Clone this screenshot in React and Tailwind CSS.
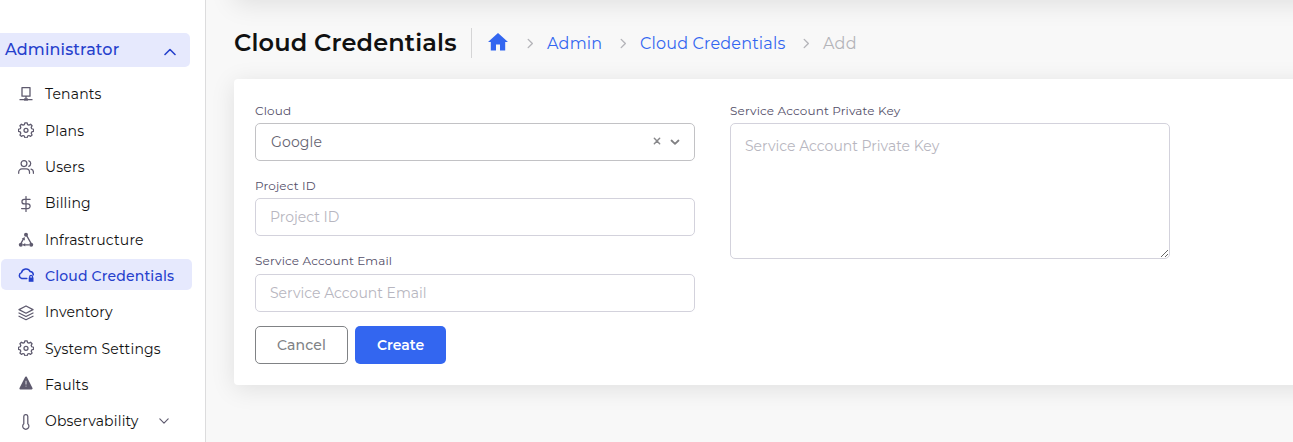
import React from 'react';

const Svg = ({ children, className = 'h-4 w-4' }) => (
  <svg viewBox="0 0 16 16" fill="none" stroke="currentColor" strokeWidth="1.25" strokeLinecap="round" strokeLinejoin="round" className={'shrink-0 ' + className}>
    {children}
  </svg>
);

const Tenants = () => (
  <Svg className="-mt-0.5 h-4 w-4">
    <path d="M4 1.6h8v8.6H4zM8 10.2v3M1.5 13.7h13" strokeWidth="1.3" strokeLinecap="butt" />
    <path d="M6 12.4h4v2.2H6z" fill="currentColor" stroke="none" />
  </Svg>
);

const Gear = () => (
  <svg viewBox="0 0 24 24" fill="none" stroke="currentColor" strokeWidth="1.9" strokeLinejoin="round" className="-mt-0.5 h-4 w-4 shrink-0">
    <path d="M10.4 1.2h3.2l.8 2.7 2 .8 2.5-1.300 2.200 2.200-1.300 2.500.8 2 2.700.8v3.200l-2.700.8-.8 2 1.300 2.500-2.200 2.200-2.500-1.300-2 .8-.8 2.700h-3.200l-.8-2.700-2-.8-2.500 1.300-2.200-2.200 1.300-2.500-.8-2-2.700-.8v-3.200l2.700-.8.8-2-1.300-2.500 2.200-2.200 2.500 1.300 2-.8z" />
    <circle cx="12" cy="12.5" r="3" />
  </svg>
);

const Users = () => (
  <Svg>
    <circle cx="6" cy="4.6" r="2.9" />
    <path d="M.7 14.3v-1.2a3.2 3.2 0 0 1 3.2-3.2h4.4a3.2 3.2 0 0 1 3.2 3.2v1.2M10.8 1.8a3 3 0 0 1 0 5.6M13 10.1a3.1 3.1 0 0 1 2.4 3v1.2" />
  </Svg>
);

const Dollar = () => (
  <Svg>
    <path d="M8 .6v14.8M12 3.4H6.2a2.2 2.2 0 0 0 0 4.5h3.6a2.3 2.3 0 0 1 0 4.6H3.6" />
  </Svg>
);

const Nodes = () => (
  <Svg className="-mt-px h-4 w-4">
    <path d="M9.1 4.4l3.7 6.4M5.3 12.8h5.4M3.4 10.6l1.8-3.2" strokeWidth="1.3" />
    <g fill="currentColor" stroke="none">
      <circle cx="8" cy="2.8" r="2" />
      <circle cx="2.8" cy="12.8" r="2" />
      <circle cx="13.2" cy="12.8" r="2" />
      <path d="M5 12.8 7.2 11v3.6zM3.7 6.8l3-1.7.2 3.5z" />
    </g>
  </Svg>
);

const CloudLock = () => (
  <Svg className="-mt-0.5 h-4 w-4">
    <path d="M8.8 11.4H3.7A3 3 0 0 1 3.5 5.6 4.6 4.6 0 0 1 12.2 4.6a3.3 3.3 0 0 1 3.1 3.2" strokeWidth="1.5" />
    <path d="M11.7 11V9.8a1.4 1.4 0 0 1 2.8 0V11" />
    <path d="M10.7 10.6h4.8v4.2h-4.8z" fill="currentColor" stroke="none" />
  </Svg>
);

const Layers = () => (
  <Svg>
    <path d="M8 1 15 4.6 8 8.2 1 4.6zM1 8l7 3.5L15 8M1 11.2l7 3.5 7-3.5" />
  </Svg>
);

const Warning = () => (
  <Svg className="-mt-1 h-4 w-4">
    <path d="M8 2.5 13.6 13.4H2.4z" fill="currentColor" strokeWidth="2" />
    <path d="M8 5.8v3.6M8 10.8v.8" stroke="#c9c8cf" strokeLinecap="butt" />
  </Svg>
);

const Thermo = () => (
  <Svg>
    <path d="M5.8 9.8V2.6a2 2 0 0 1 4 0v7.2a3.1 3.1 0 1 1-4 0z" />
  </Svg>
);

const Chevron = ({ d, className, w = 1.4 }) => (
  <svg viewBox="0 0 12 12" fill="none" stroke="currentColor" strokeWidth={w} strokeLinecap="round" strokeLinejoin="round" className={className}>
    <path d={d} />
  </svg>
);

const items = [
  { label: 'Tenants', Icon: Tenants },
  { label: 'Plans', Icon: Gear },
  { label: 'Users', Icon: Users },
  { label: 'Billing', Icon: Dollar },
  { label: 'Infrastructure', Icon: Nodes },
  { label: 'Cloud Credentials', Icon: CloudLock, active: true },
  { label: 'Inventory', Icon: Layers },
  { label: 'System Settings', Icon: Gear },
  { label: 'Faults', Icon: Warning },
  { label: 'Observability', Icon: Thermo, more: true },
];

function Sidebar() {
  return (
    <aside className="flex w-[206px] shrink-0 flex-col border-r border-[#dcdcdd] bg-white pt-[33px]">
      <div className="flex h-[34px] w-[190px] shrink-0 items-center justify-between rounded-r-[5px] bg-[#e6e9fd] pl-[5px] pr-3.5 text-[#2540cc]">
        <span className="text-[16px] font-medium tracking-[0.15px]">Administrator</span>
        <Chevron d="M1 8.5 6 3.5l5 5" className="mt-1 h-3 w-3" w={1.6} />
      </div>
      <nav className="mt-[9.6px] flex flex-col">
        {items.map(({ label, Icon, active, more }) => (
          <div key={label} className="flex h-[36.33px] shrink-0 items-center pb-[3px] pl-px">
            <a className={'flex h-[31px] w-[191px] items-center rounded-[5px] pl-[17px] pt-[3px] ' + (active ? 'bg-[#e6e9fd] font-medium text-[#2540cc]' : 'text-[#5e5a6e]')}>
              <Icon />
              <span className={'ml-[11px] text-[14px] tracking-[0.17px]' + (active ? '' : ' text-[#111]')}>{label}</span>
              {more && <Chevron d="M1 3.5 6 8.5l5-5" className="-mt-0.5 ml-auto mr-[23px] h-2.5 w-2.5" />}
            </a>
          </div>
        ))}
      </nav>
    </aside>
  );
}

function Crumb({ children }) {
  return (
    <>
      <Chevron d="M3.5 1.5 8 6l-4.5 4.5" className="mt-px h-[11px] w-[11px] text-[#b4b4b9]" w={1.5} />
      {children}
    </>
  );
}

function Field({ label, height = 'h-[75px]', children }) {
  return (
    <div className={'flex w-[440px] shrink-0 flex-col ' + height}>
      <label className="mb-1 h-4 text-[12px] leading-4 tracking-[0.14px] text-[#544f69]">{label}</label>
      {children}
    </div>
  );
}

const input = 'h-[38px] w-full shrink-0 rounded-[5px] border border-[#d3d2dc] bg-white px-3.5 text-[14px] outline-none placeholder:text-[#b7b6c0]';

export default function App() {
  return (
    <div className="flex h-[442px] w-[1293px] overflow-hidden bg-[#f8f8f8] font-['Montserrat','Inter',sans-serif]">
      <Sidebar />
      <main className="flex min-w-0 flex-1 flex-col overflow-hidden pl-7">
        <div className="-mt-[100px] h-[100px] w-[1100px] shrink-0 bg-white shadow-[0_4px_24px_rgba(0,0,0,0.1)]" />
        <header className="flex h-[79px] shrink-0 items-center pt-[7px]">
          <h1 className="w-[223px] whitespace-nowrap text-[24px] font-semibold tracking-[0.16px] text-[#111]">Cloud Credentials</h1>
          <div className="ml-3.5 h-[30px] w-px bg-[#d5d5d6]" />
          <nav className="flex items-center text-[16px] text-[#3366f0]">
            <svg viewBox="0 0 20 18" fill="currentColor" className="-mt-0.5 ml-4 mr-[17px] h-[18px] w-5">
              <path d="M10 0 20 9h-2.8v8.5h-5.2v-6H8v6H2.8V9H0z" />
            </svg>
            <Crumb><a className="ml-[11px] mr-4 mt-px w-[55px] whitespace-nowrap tracking-[0.2px]">Admin</a></Crumb>
            <Crumb><a className="ml-[11px] mr-4 mt-px w-[145px] whitespace-nowrap tracking-[0.18px]">Cloud Credentials</a></Crumb>
            <Crumb><span className="ml-[11px] mt-px tracking-[0.2px] text-[#b4b4b9]">Add</span></Crumb>
          </nav>
        </header>
        <section className="flex h-[306px] w-[1100px] shrink-0 gap-[35px] rounded-[4px] bg-white pl-[21px] pt-6 shadow-[0_4px_24px_rgba(0,0,0,0.1)]">
          <div className="flex flex-col">
            <Field label="Cloud">
              <div className="flex h-[38px] shrink-0 items-center rounded-[5px] border border-[#c2c2c5] pl-[15px] pr-[13px] text-[14px] text-[#656371]">
                <span className="tracking-[0.15px]">Google</span>
                <Chevron d="M2 2l8 8M10 2l-8 8" className="-mt-0.5 ml-auto h-2 w-2 text-[#88888b]" w={2.2} />
                <Chevron d="M2.5 4.5 6 7.8l3.5-3.3" className="ml-2 h-3 w-3 text-[#808083]" w={1.8} />
              </div>
            </Field>
            <Field label="Project ID">
              <input className={input} placeholder="Project ID" />
            </Field>
            <Field label="Service Account Email" height="h-[73px]">
              <input className={input + ' mt-px'} placeholder="Service Account Email" />
            </Field>
            <div className="flex gap-[7px] text-[14px]">
              <button className="h-[38px] w-[93px] rounded-[5px] border border-[#808285] font-medium tracking-[0.15px] text-[#808285]">Cancel</button>
              <button className="h-[38px] w-[91px] rounded-[5px] bg-[#3366f0] font-semibold text-white">Create</button>
            </div>
          </div>
          <Field label="Service Account Private Key">
            <textarea className="h-[136px] w-full shrink-0 resize rounded-[5px] border border-[#d3d2dc] px-3.5 pt-3 text-[14px] outline-none placeholder:text-[#b7b6c0]" placeholder="Service Account Private Key" />
          </Field>
        </section>
      </main>
    </div>
  );
}
